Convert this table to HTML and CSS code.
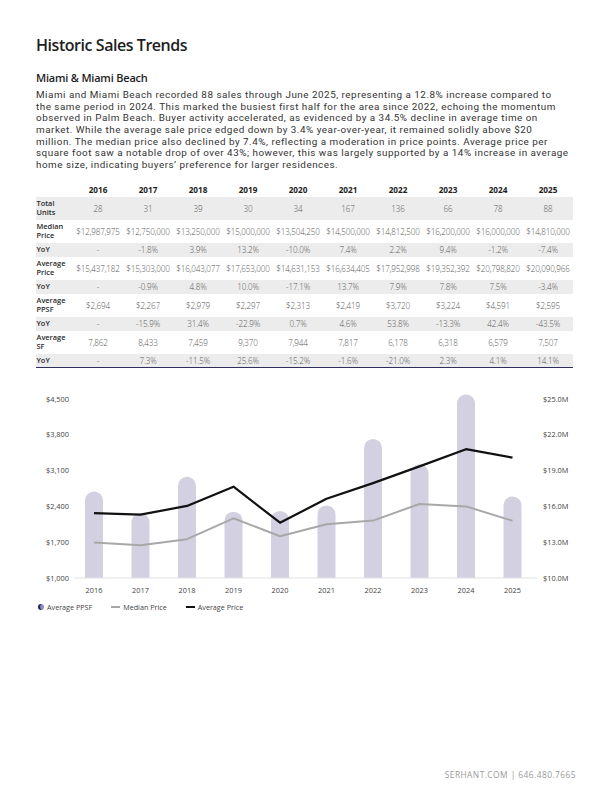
FILE: index.html
```html
<!DOCTYPE html>
<html>
<head>
<meta charset="utf-8">
<link rel="stylesheet" href="styles.css">
</head>
<body>
<div class="page">
  <h1 class="title">Historic Sales Trends</h1>
  <h2 class="subtitle">Miami &amp; Miami Beach</h2>
  <p class="intro">Miami and Miami Beach recorded 88 sales through June 2025, representing a 12.8% increase compared to<br>the same period in 2024. This marked the busiest first half for the area since 2022, echoing the momentum<br>observed in Palm Beach. Buyer activity accelerated, as evidenced by a 34.5% decline in average time on<br>market. While the average sale price edged down by 3.4% year-over-year, it remained solidly above $20<br>million. The median price also declined by 7.4%, reflecting a moderation in price points. Average price per<br>square foot saw a notable drop of over 43%; however, this was largely supported by a 14% increase in average<br>home size, indicating buyers’ preference for larger residences.</p>

  <table class="stats">
    <colgroup><col class="c-label"><col span="10" class="c-val"></colgroup>
    <thead>
      <tr><th></th><th>2016</th><th>2017</th><th>2018</th><th>2019</th><th>2020</th><th>2021</th><th>2022</th><th>2023</th><th>2024</th><th>2025</th></tr>
    </thead>
    <tbody>
      <tr class="shade two"><th>Total<br>Units</th><td>28</td><td>31</td><td>39</td><td>30</td><td>34</td><td>167</td><td>136</td><td>66</td><td>78</td><td>88</td></tr>
      <tr class="two"><th>Median<br>Price</th><td>$12,987,975</td><td>$12,750,000</td><td>$13,250,000</td><td>$15,000,000</td><td>$13,504,250</td><td>$14,500,000</td><td>$14,812,500</td><td>$16,200,000</td><td>$16,000,000</td><td>$14,810,000</td></tr>
      <tr class="shade"><th>YoY</th><td>-</td><td>-1.8%</td><td>3.9%</td><td>13.2%</td><td>-10.0%</td><td>7.4%</td><td>2.2%</td><td>9.4%</td><td>-1.2%</td><td>-7.4%</td></tr>
      <tr class="two"><th>Average<br>Price</th><td>$15,437,182</td><td>$15,303,000</td><td>$16,043,077</td><td>$17,653,000</td><td>$14,631,153</td><td>$16,634,405</td><td>$17,952,998</td><td>$19,352,392</td><td>$20,798,820</td><td>$20,090,966</td></tr>
      <tr class="shade"><th>YoY</th><td>-</td><td>-0.9%</td><td>4.8%</td><td>10.0%</td><td>-17.1%</td><td>13.7%</td><td>7.9%</td><td>7.8%</td><td>7.5%</td><td>-3.4%</td></tr>
      <tr class="two"><th>Average<br>PPSF</th><td>$2,694</td><td>$2,267</td><td>$2,979</td><td>$2,297</td><td>$2,313</td><td>$2,419</td><td>$3,720</td><td>$3,224</td><td>$4,591</td><td>$2,595</td></tr>
      <tr class="shade"><th>YoY</th><td>-</td><td>-15.9%</td><td>31.4%</td><td>-22.9%</td><td>0.7%</td><td>4.6%</td><td>53.8%</td><td>-13.3%</td><td>42.4%</td><td>-43.5%</td></tr>
      <tr class="two"><th>Average<br>SF</th><td>7,862</td><td>8,433</td><td>7,459</td><td>9,370</td><td>7,944</td><td>7,817</td><td>6,178</td><td>6,318</td><td>6,579</td><td>7,507</td></tr>
      <tr class="shade last"><th>YoY</th><td>-</td><td>7.3%</td><td>-11.5%</td><td>25.6%</td><td>-15.2%</td><td>-1.6%</td><td>-21.0%</td><td>2.3%</td><td>4.1%</td><td>14.1%</td></tr>
    </tbody>
  </table>

  <svg class="chart" width="540" height="210" viewBox="36 388 540 210">
    <g class="bars">
      <path d="M85 577V499.4A9 9 0 0 1 103 499.4V577Z"/>
      <path d="M131.5 577V521.2A9 9 0 0 1 149.5 521.2V577Z"/>
      <path d="M178 577V484.8A9 9 0 0 1 196 484.8V577Z"/>
      <path d="M224.5 577V519.7A9 9 0 0 1 242.5 519.7V577Z"/>
      <path d="M271 577V518.9A9 9 0 0 1 289 518.9V577Z"/>
      <path d="M317.5 577V513.4A9 9 0 0 1 335.5 513.4V577Z"/>
      <path d="M364 577V446.9A9 9 0 0 1 382 446.9V577Z"/>
      <path d="M410.5 577V472.3A9 9 0 0 1 428.5 472.3V577Z"/>
      <path d="M457 577V402.4A9 9 0 0 1 475 402.4V577Z"/>
      <path d="M503.5 577V504.4A9 9 0 0 1 521.5 504.4V577Z"/>
    </g>
    <line class="base" x1="74" y1="577" x2="537" y2="577"/>
    <polyline class="median" points="94,541.4 140.5,544.2 187,538.2 233.5,517.3 280,535.2 326.5,523.3 373,519.6 419.5,503 466,505.4 512.5,519.7"/>
    <polyline class="average" points="94,512.1 140.5,513.7 187,504.9 233.5,485.7 280,521.7 326.5,497.8 373,482.1 419.5,465.4 466,448.2 512.5,456.6"/>
    <g class="axis left">
      <text x="69" y="400.5">$4,500</text>
      <text x="69" y="436.3">$3,800</text>
      <text x="69" y="472.1">$3,100</text>
      <text x="69" y="507.9">$2,400</text>
      <text x="69" y="543.7">$1,700</text>
      <text x="69" y="579.5">$1,000</text>
    </g>
    <g class="axis right">
      <text x="543" y="400.5">$25.0M</text>
      <text x="543" y="436.3">$22.0M</text>
      <text x="543" y="472.1">$19.0M</text>
      <text x="543" y="507.9">$16.0M</text>
      <text x="543" y="543.7">$13.0M</text>
      <text x="543" y="579.5">$10.0M</text>
    </g>
    <g class="axis years">
      <text x="94" y="591.5">2016</text>
      <text x="140.5" y="591.5">2017</text>
      <text x="187" y="591.5">2018</text>
      <text x="233.5" y="591.5">2019</text>
      <text x="280" y="591.5">2020</text>
      <text x="326.5" y="591.5">2021</text>
      <text x="373" y="591.5">2022</text>
      <text x="419.5" y="591.5">2023</text>
      <text x="466" y="591.5">2024</text>
      <text x="512.5" y="591.5">2025</text>
    </g>
  </svg>

  <div class="legend">
    <div class="legend-item">
      <svg class="dot" width="6" height="6" viewBox="0 0 6 6"><circle cx="3" cy="3" r="3" fill="#8f8bbb"/><path d="M3.6 0.06A3 3 0 1 0 3.6 5.94A3.6 3.6 0 0 1 3.6 0.06Z" fill="#23235e"/></svg>
      <span>Average PPSF</span>
    </div>
    <div class="legend-item">
      <span class="swatch gray"></span>
      <span>Median Price</span>
    </div>
    <div class="legend-item">
      <span class="swatch black"></span>
      <span>Average Price</span>
    </div>
  </div>

  <footer class="footer">SERHANT.COM | 646.480.7665</footer>
</div>
</body>
</html>
```

FILE: styles.css
```css
* { box-sizing: border-box; }

html, body {
  margin: 0;
  padding: 0;
  background: #ffffff;
}

body {
  font-family: "Open Sans", "Liberation Sans", sans-serif;
  color: #2a2a2a;
}

.page {
  width: 612px;
  height: 792px;
  padding: 35px 36px 12px 36px;
  display: flex;
  flex-direction: column;
}

.title {
  margin: 0;
  font-size: 16px;
  line-height: 20px;
  font-weight: 600;
  color: #1e1e1e;
  letter-spacing: -0.45px;
}

.subtitle {
  margin: 16px 0 0 0;
  font-size: 11px;
  line-height: 14px;
  font-weight: 600;
  color: #1e1e1e;
  letter-spacing: -0.2px;
}

.intro {
  margin: 4px 0 0 0;
  font-family: Roboto, "Open Sans", sans-serif;
  font-size: 9.9px;
  line-height: 11.67px;
  font-weight: 400;
  letter-spacing: 0.5px;
  color: #333333;
  width: 560px;
}

.stats {
  margin-top: 12px;
  width: 537px;
  border-collapse: collapse;
  table-layout: fixed;
}

.stats .c-label { width: 37px; }
.stats .c-val { width: 50px; }

.stats th,
.stats td {
  padding: 0;
  font-size: 7.4px;
  line-height: 9px;
  white-space: nowrap;
}

.stats thead th {
  height: 14px;
  font-size: 8.2px;
  font-weight: 700;
  color: #222222;
  text-align: center;
  vertical-align: middle;
}

.stats tbody th {
  text-align: left;
  font-weight: 600;
  color: #2a2a2a;
  padding-left: 0.5px;
}

.stats tbody td {
  text-align: center;
  font-size: 8.1px;
  font-weight: 300;
  color: #5a5a5a;
  vertical-align: middle;
  letter-spacing: -0.15px;
}

.stats tbody tr { height: 14px; }
.stats tbody tr.two { height: 23px; }
.stats tbody tr.shade { background: #ececec; }
.stats tbody tr.last { border-bottom: 1.5px solid #2f2d5c; }

.chart {
  display: block;
  margin-top: 21px;
  overflow: visible;
}

.chart .bars path { fill: #d3d0e1; }
.chart .base { stroke: #e0e0e0; stroke-width: 1; }
.chart .median { fill: none; stroke: #a8a8a8; stroke-width: 2; stroke-linejoin: round; }
.chart .average { fill: none; stroke: #111111; stroke-width: 2.2; stroke-linejoin: round; }

.chart .axis text {
  font-family: "Open Sans", "Liberation Sans", sans-serif;
  font-size: 7.4px;
  font-weight: 400;
  fill: #444444;
}
.chart .axis.left text { text-anchor: end; }
.chart .axis.right text { text-anchor: start; }
.chart .axis.years text { text-anchor: middle; }

.legend {
  display: flex;
  align-items: center;
  gap: 19px;
  margin-top: 3px;
  padding-left: 2px;
  height: 10px;
  font-size: 7.2px;
  color: #444444;
}

.legend-item {
  display: flex;
  align-items: center;
  gap: 3px;
}

.legend .dot { display: block; }

.swatch {
  display: block;
  width: 9px;
  height: 1.5px;
}
.swatch.gray { background: #a8a8a8; }
.swatch.black { background: #111111; }

.footer {
  margin-top: auto;
  text-align: right;
  font-size: 8.4px;
  line-height: 10px;
  letter-spacing: 0.45px;
  color: #9a9a9a;
  font-weight: 500;
  padding-right: 0;
}
```
